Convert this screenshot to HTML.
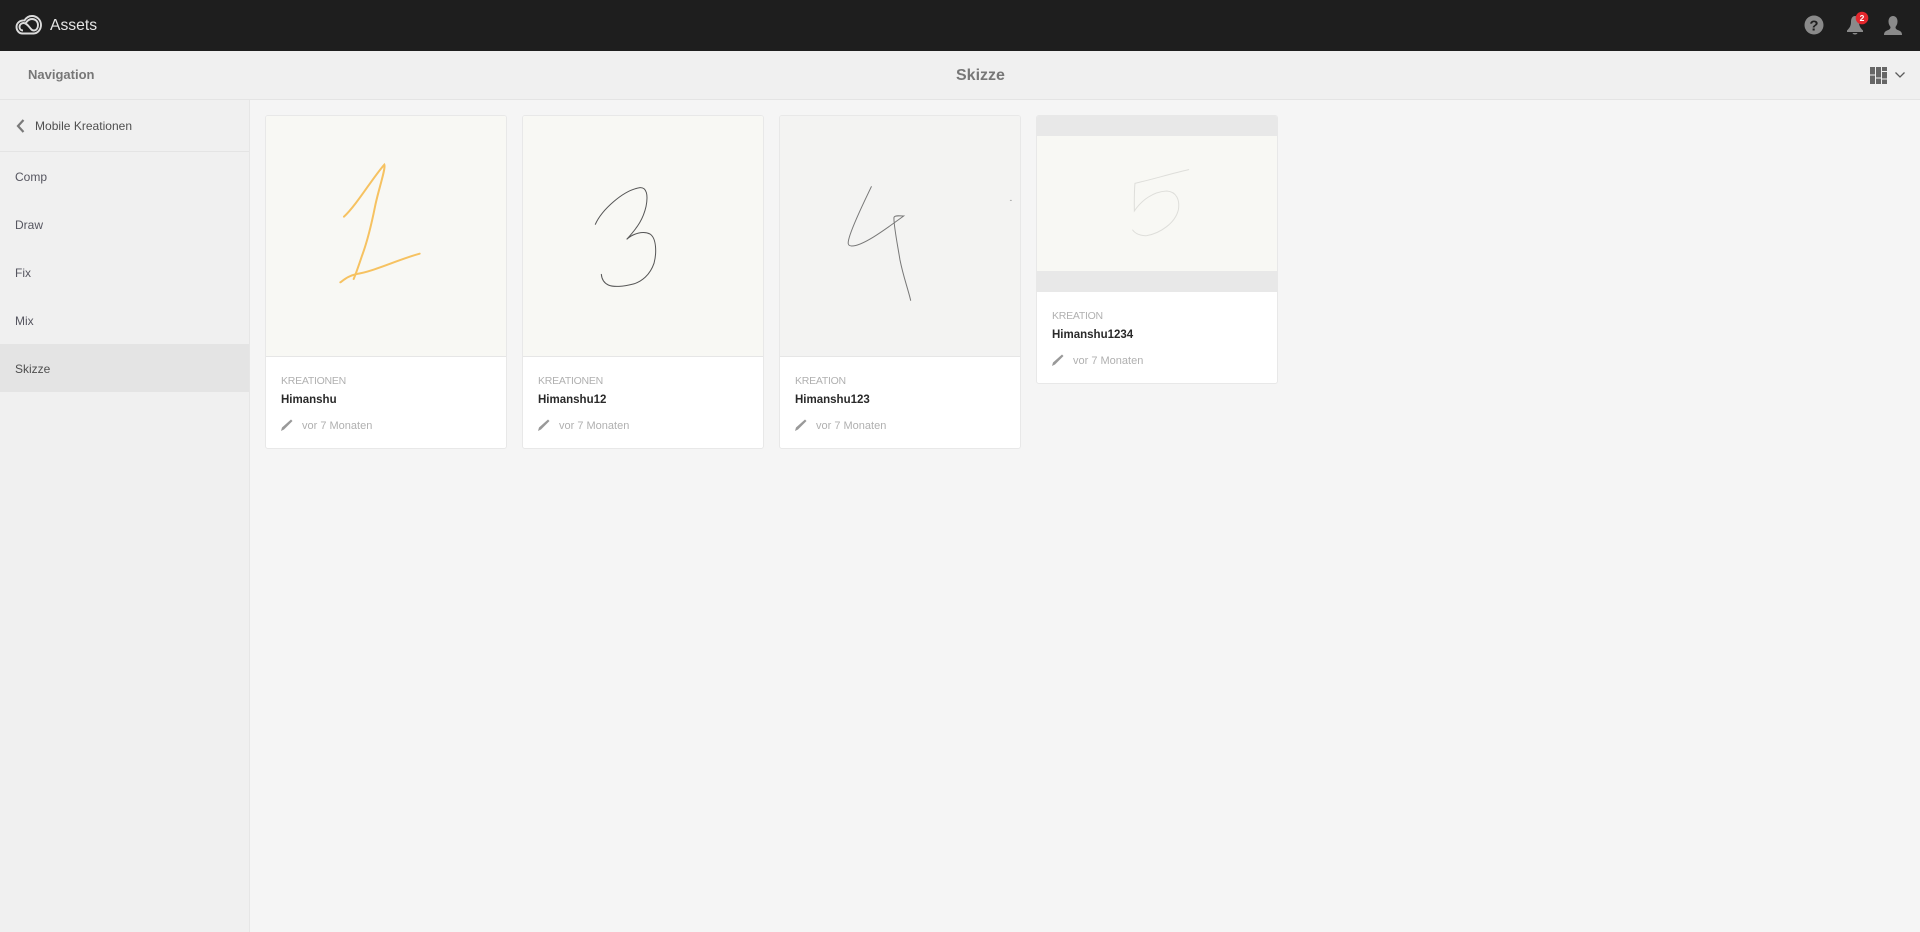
<!DOCTYPE html>
<html lang="de">
<head>
<meta charset="utf-8">
<title>Assets</title>
<style>
html,body{margin:0;padding:0;width:1920px;height:932px;overflow:hidden;background:#f5f5f5;font-family:"Liberation Sans",sans-serif}
div,svg,span{position:absolute;box-sizing:border-box}
.t{white-space:nowrap;line-height:16px}
.top{left:0;top:0;width:1920px;height:51px;background:#1e1e1e}
.nav{left:0;top:51px;width:1920px;height:49px;background:#f0f0f0;border-bottom:1px solid #e4e4e4}
.side{left:0;top:100px;width:250px;height:832px;background:#f0f0f0;border-right:1px solid #e6e6e6}
.item{font-size:12px;color:#4f4f4f;left:15px}
.card{background:#fff;border:1px solid #e8e8e8;border-radius:3px;width:242px;overflow:hidden}
.img{left:0;top:0;width:240px;background:#f8f8f4;border-bottom:1px solid #e6e6e6}
.k{left:15px;font-size:10.5px;color:#b0b0b0;letter-spacing:-.25px}
.n{left:15px;font-size:11.5px;font-weight:bold;color:#2a2a2a}
.v{left:36px;font-size:11px;color:#b0b0b0}
.p{left:14px;width:15px;height:15px}
</style>
</head>
<body>
<div class="top"></div>
<svg style="left:15px;top:13px" width="28" height="24" viewBox="0 0 28 24" fill="none" stroke="#dcdcdc" stroke-width="1.900">
<path d="M7.500 20.500H18.500C23 20.500 26 16 26 12C26 7 22 3 17 3C13.500 3 11 5 9.500 7.500C5 7 1.500 10 1.500 14C1.500 17.500 4 20.500 7.500 20.500Z"/>
<path d="M8 17.500C5.800 17.500 4.500 16 4.500 14C4.500 11.500 6.500 10 8.500 10C12 10 14 14 16 16C17 17.300 18 17.500 19 17.500C21.500 17.500 23 15 23 12C23 8.500 20.500 6 17 6C14 6 12 8 10.500 10.300"/>
</svg>
<div class="t" style="left:50px;top:18px;font-size:15.700px;color:#e6e6e6">Assets</div>
<svg style="left:1804px;top:15px" width="20" height="20" viewBox="0 0 20 20"><circle cx="10" cy="10" r="9.500" fill="#8a8a8a"/><text x="10" y="15.500" text-anchor="middle" font-family="Liberation Sans" font-weight="bold" font-size="15" fill="#1e1e1e">?</text></svg>
<svg style="left:1846px;top:14px" width="20" height="22" viewBox="0 0 20 22"><path d="M9 2C6 2 5 5 5 8C5 12 3.500 14 1 16.500V18H17V16.500C14.500 14 13 12 13 8C13 5 12 2 9 2Z" fill="#8a8a8a"/><path d="M6.500 19H11.500C11 21 7 21 6.500 19Z" fill="#8a8a8a"/></svg>
<svg style="left:1854.500px;top:11px" width="14" height="14" viewBox="0 0 14 14"><circle cx="7" cy="7" r="6.300" fill="#e4262c"/><text x="7" y="9.900" text-anchor="middle" font-family="Liberation Sans" font-weight="bold" font-size="8.500" fill="#fff">2</text></svg>
<svg style="left:1883px;top:15px" width="20" height="21" viewBox="0 0 20 21"><path d="M10 1C7 1 5.500 3.500 5.500 6.500C5.500 9 6.500 10.500 7.500 12C7.500 14 6.500 14.500 4 15.500C2 16.300 1 17.500 1 20H19C19 17.500 18 16.300 16 15.500C13.500 14.500 12.500 14 12.500 12C13.500 10.500 14.500 9 14.500 6.500C14.500 3.500 13 1 10 1Z" fill="#8a8a8a"/></svg>

<div class="nav"></div>
<div class="t" style="left:28px;top:67px;font-size:13px;font-weight:bold;color:#777">Navigation</div>
<div class="t" style="left:956px;top:68px;font-size:16px;font-weight:bold;color:#777">Skizze</div>
<svg style="left:1870px;top:67px" width="18" height="18" viewBox="0 0 18 18" fill="#666"><rect x="0" y="0" width="5" height="7.500"/><rect x="0" y="8.500" width="5" height="8.500"/><rect x="6" y="0" width="5" height="10.500"/><rect x="6" y="11.500" width="5" height="5.500"/><rect x="12" y="0" width="5" height="4"/><rect x="12" y="5" width="5" height="6.500"/><rect x="12" y="12.500" width="5" height="4.500"/></svg>
<svg style="left:1894px;top:71px" width="12" height="8" viewBox="0 0 12 8" fill="none" stroke="#5c5c5c" stroke-width="1.300"><path d="M1.500 1.500L6 6L10.500 1.500"/></svg>

<div class="side"></div>
<div style="left:0;top:151px;width:249px;height:1px;background:#e4e4e4"></div>
<div style="left:0;top:344px;width:249px;height:48px;background:#e4e4e4"></div>
<svg style="left:15px;top:118px" width="12" height="16" viewBox="0 0 12 16" fill="none" stroke="#7a7a7a" stroke-width="2.200"><path d="M8.500 2L3 8L8.500 14"/></svg>
<div class="t item" style="left:35px;top:118px;letter-spacing:.02px">Mobile Kreationen</div>
<div class="t item" style="top:169px;color:#55555f">Comp</div>
<div class="t item" style="top:217px;color:#55555f">Draw</div>
<div class="t item" style="top:265px;color:#55555f">Fix</div>
<div class="t item" style="top:313px;color:#55555f">Mix</div>
<div class="t item" style="top:361px">Skizze</div>

<!-- Card 1 -->
<div class="card" style="left:265px;top:115px;height:334px">
<div class="img" style="height:241px"></div>
<div class="t k" style="top:257px">KREATIONEN</div>
<div class="t n" style="top:276px">Himanshu</div>
<svg class="p" style="top:301px" viewBox="0 0 15 15"><path d="M1 14L2 10.500L11 2.500L12.500 4L4 12.500Z" fill="#999"/></svg>
<div class="t v" style="top:302px">vor 7 Monaten</div>
</div>
<!-- Card 2 -->
<div class="card" style="left:522px;top:115px;height:334px">
<div class="img" style="height:241px"></div>
<div class="t k" style="top:257px">KREATIONEN</div>
<div class="t n" style="top:276px">Himanshu12</div>
<svg class="p" style="top:301px" viewBox="0 0 15 15"><path d="M1 14L2 10.500L11 2.500L12.500 4L4 12.500Z" fill="#999"/></svg>
<div class="t v" style="top:302px">vor 7 Monaten</div>
</div>
<!-- Card 3 -->
<div class="card" style="left:779px;top:115px;height:334px">
<div class="img" style="height:241px;background:#f3f3f2"></div>
<div class="t k" style="top:257px">KREATION</div>
<div class="t n" style="top:276px">Himanshu123</div>
<svg class="p" style="top:301px" viewBox="0 0 15 15"><path d="M1 14L2 10.500L11 2.500L12.500 4L4 12.500Z" fill="#999"/></svg>
<div class="t v" style="top:302px">vor 7 Monaten</div>
</div>
<!-- Card 4 -->
<div class="card" style="left:1036px;top:115px;height:269px">
<div style="left:0;top:0;width:240px;height:176px;background:#e8e8e8"></div>
<div style="left:0;top:20px;width:240px;height:135px;background:#f8f8f4"></div>
<div class="t k" style="top:192px">KREATION</div>
<div class="t n" style="top:211px">Himanshu1234</div>
<svg class="p" style="top:236px" viewBox="0 0 15 15"><path d="M1 14L2 10.500L11 2.500L12.500 4L4 12.500Z" fill="#999"/></svg>
<div class="t v" style="top:237px">vor 7 Monaten</div>
</div>

<!-- Sketches -->
<svg style="left:250px;top:100px" width="280" height="360" viewBox="0 0 840 1080" fill="none" stroke="#f6c261" stroke-width="6" stroke-linecap="round">
<path d="M282 350C320 315 370 230 403 194C408 205 385 270 375 320C365 370 350 430 335 470C325 500 318 520 311 537"/>
<path d="M271 547C285 537 295 528 320 522C370 515 440 480 509 461"/>
</svg>
<svg style="left:510px;top:100px" width="280" height="360" viewBox="0 0 840 1080" fill="none" stroke="#555" stroke-width="3" stroke-linecap="round">
<path d="M256 373C275 330 340 270 390 263C410 262 415 285 408 320C400 355 385 380 350 418C370 400 400 392 420 402C440 415 440 460 432 490C420 525 395 545 370 552C340 560 310 562 295 555C280 548 275 535 274 523"/>
</svg>
<svg style="left:770px;top:100px" width="280" height="360" viewBox="0 0 840 1080" fill="none" stroke="#777" stroke-width="3" stroke-linecap="round">
<path d="M304 260C285 300 255 360 240 405C232 430 232 437 245 438C280 438 350 385 401 348C390 348 375 345 372 352C370 370 380 420 390 480C400 530 412 560 422 601"/>
<path d="M721 301H724" stroke="#aaa"/>
</svg>
<svg style="left:1020px;top:100px" width="280" height="300" viewBox="0 0 840 900" fill="none" stroke="#dededa" stroke-width="3" stroke-linecap="round">
<path d="M506 209C450 222 390 240 345 250C342 280 343 310 343 333C365 300 400 275 440 273C470 275 480 300 475 330C465 370 420 400 380 407C360 408 345 400 338 390"/>
</svg>
</body>
</html>
